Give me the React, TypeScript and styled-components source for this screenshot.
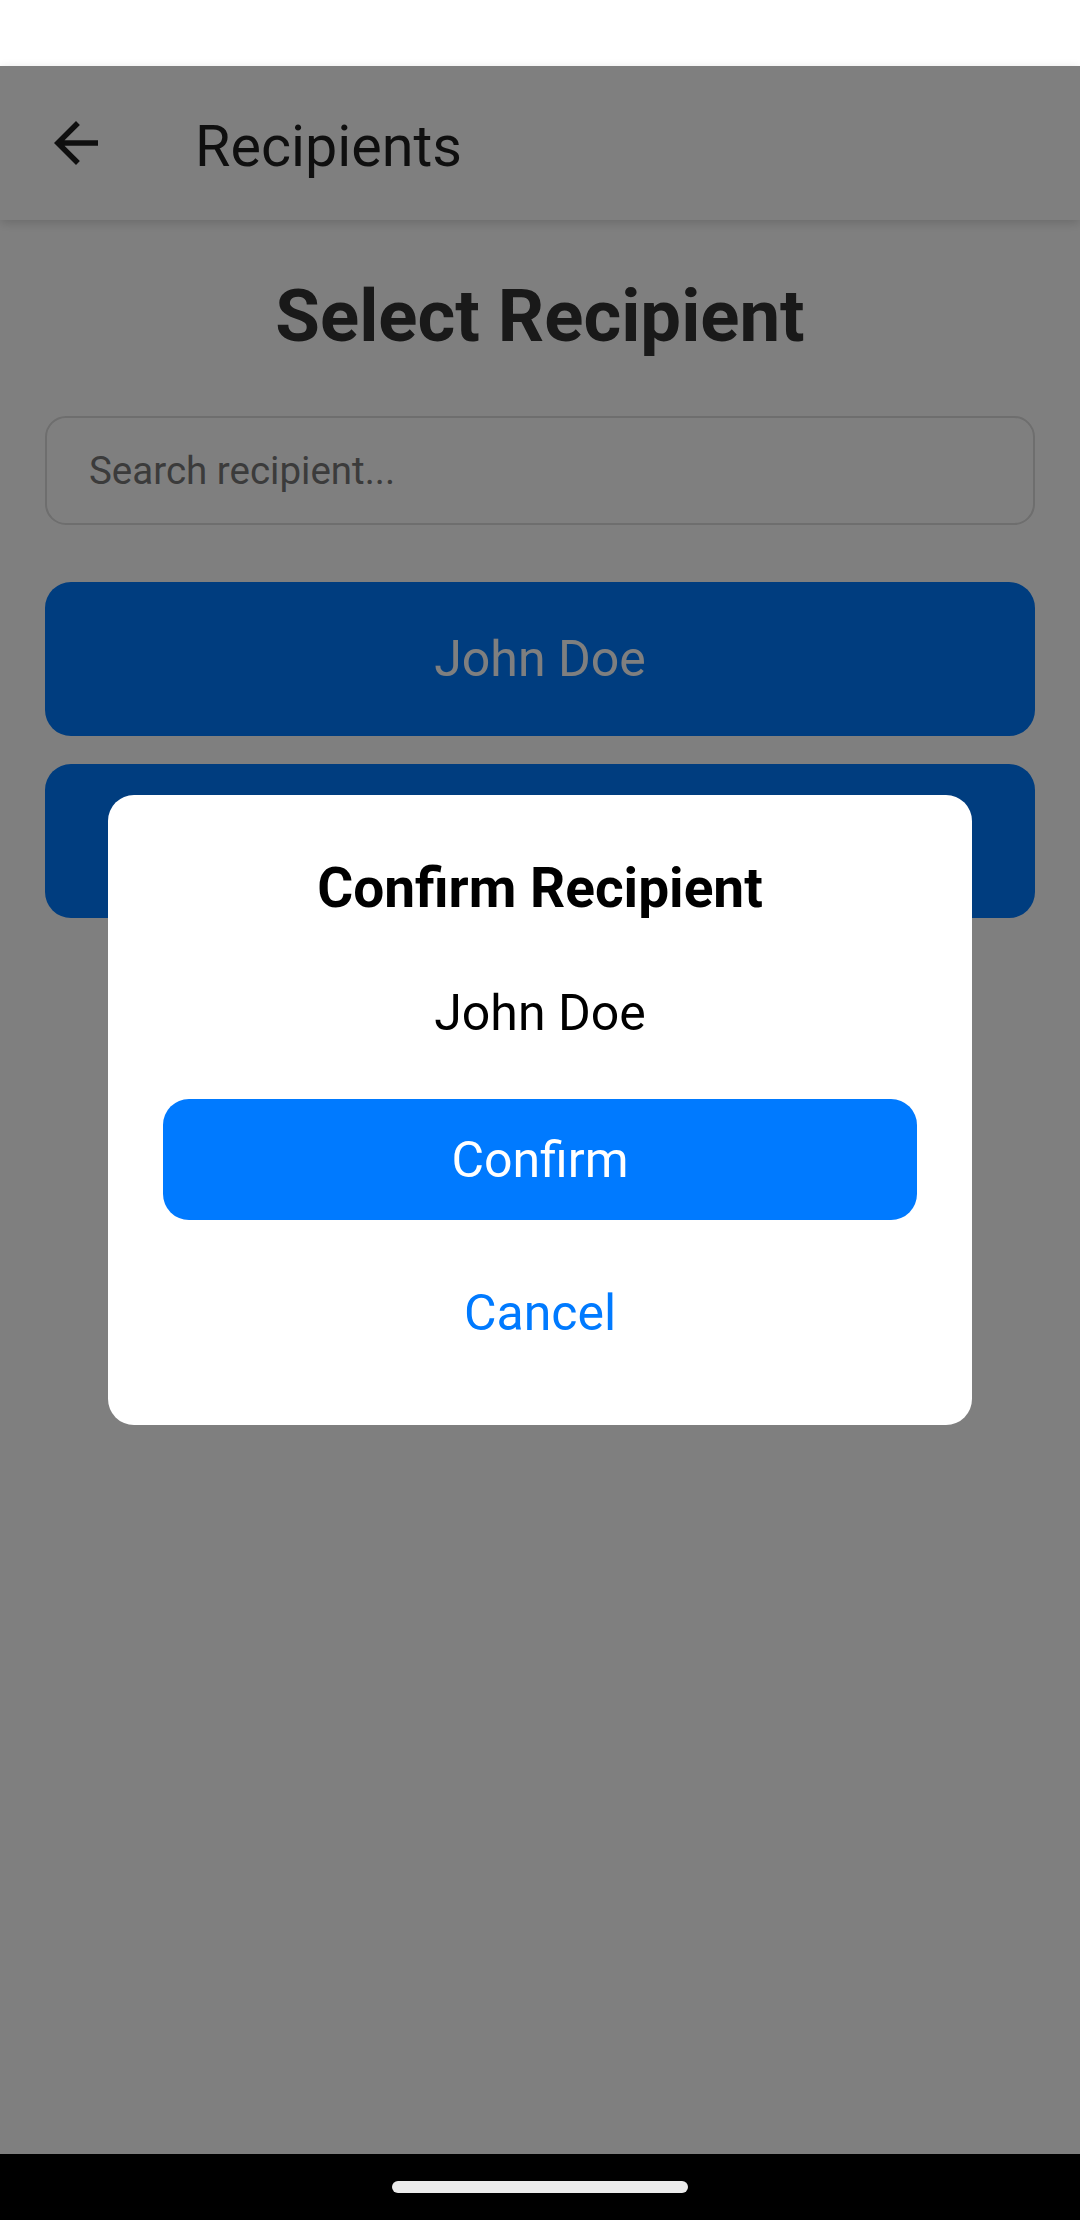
import React from "react";
import styled, { createGlobalStyle } from "styled-components";

const GlobalStyle = createGlobalStyle`
  html, body {
    margin: 0;
    padding: 0;
    background: #ffffff;
  }
  body {
    font-family: Roboto, "Noto Sans", "Liberation Sans", sans-serif;
  }
  * {
    box-sizing: border-box;
  }
`;

const Screen = styled.div`
  width: 1080px;
  height: 2220px;
  display: flex;
  flex-direction: column;
  overflow: hidden;
  background: #ffffff;
`;

const StatusBar = styled.div`
  height: 66px;
  flex: none;
  background: #ffffff;
`;

const Body = styled.div`
  position: relative;
  flex: 1;
  display: flex;
  flex-direction: column;
  background: #ffffff;
`;

const AppBar = styled.header`
  position: relative;
  z-index: 1;
  height: 154px;
  flex: none;
  display: flex;
  align-items: center;
  padding-left: 43px;
  background: #ffffff;
  box-shadow: 0 3px 10px rgba(0, 0, 0, 0.16);
`;

const IconButton = styled.button`
  width: 66px;
  height: 66px;
  padding: 0;
  border: none;
  background: transparent;
  display: flex;
  align-items: center;
  justify-content: center;
  color: #1f1f1f;
`;

const AppBarTitle = styled.h1`
  margin: 6px 0 0 86px;
  font-size: 57.5px;
  font-weight: 400;
  color: #1f1f1f;
  line-height: normal;
`;

const Content = styled.main`
  flex: 1;
  display: flex;
  flex-direction: column;
  padding: 54px 45px 0;
  background: #ffffff;
`;

const Heading = styled.h2`
  margin: 0 0 57px;
  text-align: center;
  font-size: 72.5px;
  font-weight: 700;
  color: #333333;
  line-height: normal;
`;

const SearchInput = styled.input`
  height: 109px;
  width: 100%;
  padding: 0 42px;
  border: 2px solid #dcdcdc;
  border-radius: 21px;
  background: #ffffff;
  font-family: Roboto, "Noto Sans", sans-serif;
  font-size: 38.5px;
  color: #222;
  outline: none;
  margin-bottom: 57px;
  &::placeholder {
    color: #777777;
  }
`;

const RecipientList = styled.div`
  display: flex;
  flex-direction: column;
  gap: 28px;
`;

const RecipientButton = styled.button`
  height: 154px;
  width: 100%;
  border: none;
  border-radius: 26px;
  background: #007aff;
  color: #ffffff;
  font-family: Roboto, "Noto Sans", sans-serif;
  font-size: 50px;
  font-weight: 400;
`;

const Overlay = styled.div`
  position: absolute;
  inset: 0;
  z-index: 2;
  background: rgba(0, 0, 0, 0.5);
  display: flex;
  align-items: center;
  justify-content: center;
`;

const Dialog = styled.div`
  width: 864px;
  padding: 61px 55px 52px;
  border-radius: 26px;
  background: #ffffff;
  display: flex;
  flex-direction: column;
  align-items: center;
`;

const DialogTitle = styled.h3`
  margin: 0 0 64px;
  font-size: 55px;
  font-weight: 700;
  color: #000000;
  line-height: normal;
`;

const DialogName = styled.p`
  margin: 0 0 57px;
  font-size: 50px;
  font-weight: 400;
  color: #000000;
  line-height: normal;
`;

const DialogButton = styled.button<{ $primary?: boolean }>`
  width: 100%;
  height: 121px;
  border: none;
  border-radius: 26px;
  background: ${(p) => (p.$primary ? "#007aff" : "transparent")};
  color: ${(p) => (p.$primary ? "#ffffff" : "#007aff")};
  font-family: Roboto, "Noto Sans", sans-serif;
  font-size: 50px;
  font-weight: 400;
  margin-top: ${(p) => (p.$primary ? "0" : "32px")};
`;

const NavBar = styled.div`
  height: 66px;
  flex: none;
  background: #000000;
  display: flex;
  justify-content: center;
  padding-top: 27px;
`;

const NavHandle = styled.div`
  width: 296px;
  height: 12px;
  border-radius: 6px;
  background: #ebebeb;
`;

const BackArrow = () => (
  <svg width="66" height="66" viewBox="0 0 24 24" fill="currentColor">
    <path d="M20 11H7.83l5.59-5.59L12 4l-8 8 8 8 1.41-1.41L7.83 13H20v-2z" />
  </svg>
);

export default function App() {
  return (
    <>
      <GlobalStyle />
      <Screen>
        <StatusBar />
        <Body>
          <AppBar>
            <IconButton aria-label="Back">
              <BackArrow />
            </IconButton>
            <AppBarTitle>Recipients</AppBarTitle>
          </AppBar>
          <Content>
            <Heading>Select Recipient</Heading>
            <SearchInput placeholder="Search recipient..." />
            <RecipientList>
              <RecipientButton>John Doe</RecipientButton>
              <RecipientButton aria-hidden="true" />
            </RecipientList>
          </Content>
          <Overlay>
            <Dialog>
              <DialogTitle>Confirm Recipient</DialogTitle>
              <DialogName>John Doe</DialogName>
              <DialogButton $primary>Confirm</DialogButton>
              <DialogButton>Cancel</DialogButton>
            </Dialog>
          </Overlay>
        </Body>
        <NavBar>
          <NavHandle />
        </NavBar>
      </Screen>
    </>
  );
}
